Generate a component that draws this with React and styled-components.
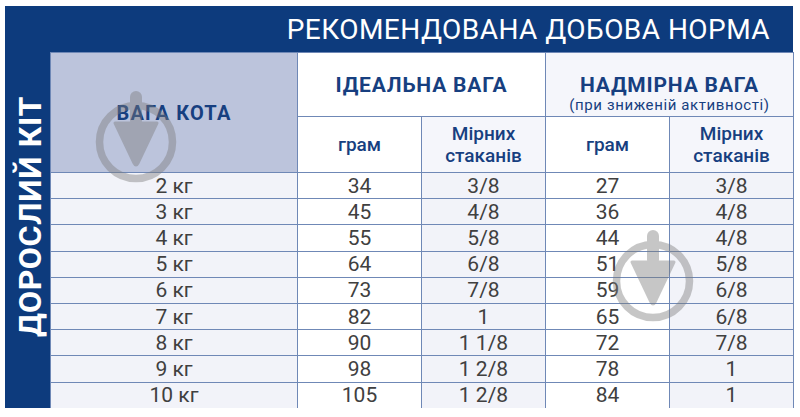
import React from 'react'
import styled, { createGlobalStyle } from 'styled-components'

const rows = [
  ['2 кг', '34', '3/8', '27', '3/8'],
  ['3 кг', '45', '4/8', '36', '4/8'],
  ['4 кг', '55', '5/8', '44', '4/8'],
  ['5 кг', '64', '6/8', '51', '5/8'],
  ['6 кг', '73', '7/8', '59', '6/8'],
  ['7 кг', '82', '1', '65', '6/8'],
  ['8 кг', '90', '1 1/8', '72', '7/8'],
  ['9 кг', '98', '1 2/8', '78', '1'],
  ['10 кг', '105', '1 2/8', '84', '1'],
]

const Watermark = ({ $left, $top }) => (
  <Mark $left={$left} $top={$top} viewBox="-45 -55 90 100" width="90" height="100">
    <g opacity="0.42" fill="#7a7a7a" stroke="#7a7a7a">
      <circle cx="0" cy="0" r="36.5" fill="none" strokeWidth="7.5" />
      <rect x="-6" y="-51" width="12" height="36" rx="6" stroke="none" />
      <path d="M -21 -19 L 21 -19 L 2 21 Q 0 25 -2 21 Z" strokeWidth="3" strokeLinejoin="round" />
    </g>
  </Mark>
)

const App = () => (
  <>
    <GlobalStyle />
    <Card>
      <Title>РЕКОМЕНДОВАНА ДОБОВА НОРМА</Title>
      <Side>
        <SideText>ДОРОСЛИЙ КІТ</SideText>
      </Side>
      <Table>
        <colgroup>
          <Col $w={247} />
          <Col $w={124} />
          <Col $w={124} />
          <Col $w={124} />
          <Col $w={124} />
        </colgroup>
        <thead>
          <GroupRow>
            <WeightHead rowSpan={2}>ВАГА КОТА</WeightHead>
            <GroupHead colSpan={2}>ІДЕАЛЬНА ВАГА</GroupHead>
            <GroupHead colSpan={2} $tint>
              НАДМІРНА ВАГА
              <Note>(при зниженій активності)</Note>
            </GroupHead>
          </GroupRow>
          <SubRow>
            <SubHead>грам</SubHead>
            <SubHead $tint>Мірних<br />стаканів</SubHead>
            <SubHead>грам</SubHead>
            <SubHead $tint>Мірних<br />стаканів</SubHead>
          </SubRow>
        </thead>
        <tbody>
          {rows.map((r) => (
            <DataRow key={r[0]}>
              {r.map((v, i) => (
                <Cell key={i} $tint={i % 2 === 0}>{v}</Cell>
              ))}
            </DataRow>
          ))}
        </tbody>
      </Table>
      <Watermark $left={86} $top={81} />
      <Watermark $left={603} $top={220} />
    </Card>
  </>
)

const GlobalStyle = createGlobalStyle`
  body {
    margin: 0;
    background: #fff;
    font-family: Roboto, 'Noto Sans', sans-serif;
  }
`

const Card = styled.div`
  position: relative;
  margin: 6px 0 0 5px;
  width: 788px;
  height: 402px;
  background: #0d3b7d;
  display: grid;
  grid-template-columns: 45px 743px;
  grid-template-rows: 46px 356px;
`

const Title = styled.div`
  grid-column: 1 / 3;
  display: flex;
  align-items: center;
  justify-content: flex-end;
  padding-right: 23px;
  color: #fff;
  font-size: 28px;
  letter-spacing: 0.45px;
`

const Side = styled.div`
  display: flex;
  align-items: center;
  justify-content: center;
  padding: 0 0 26px 4px;
`

const SideText = styled.div`
  writing-mode: vertical-rl;
  transform: rotate(180deg);
  color: #fff;
  font-size: 32px;
  font-weight: 700;
  letter-spacing: 0.6px;
  line-height: 1;
`

const Table = styled.table`
  width: 743px;
  height: 356px;
  table-layout: fixed;
  border-collapse: collapse;
  background: #fff;
  border-right: 1.5px solid #c6cde2;

  td, th {
    border: 1.5px solid #6f88b6;
    padding: 0;
    text-align: center;
  }
`

const Col = styled.col`
  width: ${(p) => p.$w}px;
`

const GroupRow = styled.tr`
  height: 64px;
`

const SubRow = styled.tr`
  height: 56px;
`

const DataRow = styled.tr`
  height: 26.2px;
`

const WeightHead = styled.th`
  background: #bcc4dc;
  color: #173f80;
  font-size: 20px;
  font-weight: 700;
  letter-spacing: 1.2px;
`

const GroupHead = styled.th`
  vertical-align: top;
  padding-top: 20px !important;
  background: ${(p) => (p.$tint ? '#f5f6fb' : '#fff')};
  color: #173f80;
  font-size: 21px;
  font-weight: 700;
  line-height: 24px;
  letter-spacing: 0.8px;
`

const Note = styled.div`
  font-size: 15px;
  font-weight: 400;
  line-height: 16px;
  letter-spacing: 0.6px;
`

const SubHead = styled.th`
  background: ${(p) => (p.$tint ? '#f5f6fb' : '#fff')};
  color: #173f80;
  font-size: 19px;
  font-weight: 500;
  line-height: 22px;
`

const Cell = styled.td`
  background: ${(p) => (p.$tint ? '#f2f3f9' : '#fff')};
  color: #404040;
  font-size: 21px;
  line-height: 24px;
`

const Mark = styled.svg`
  position: absolute;
  left: ${(p) => p.$left}px;
  top: ${(p) => p.$top}px;
  pointer-events: none;
`

export default App
